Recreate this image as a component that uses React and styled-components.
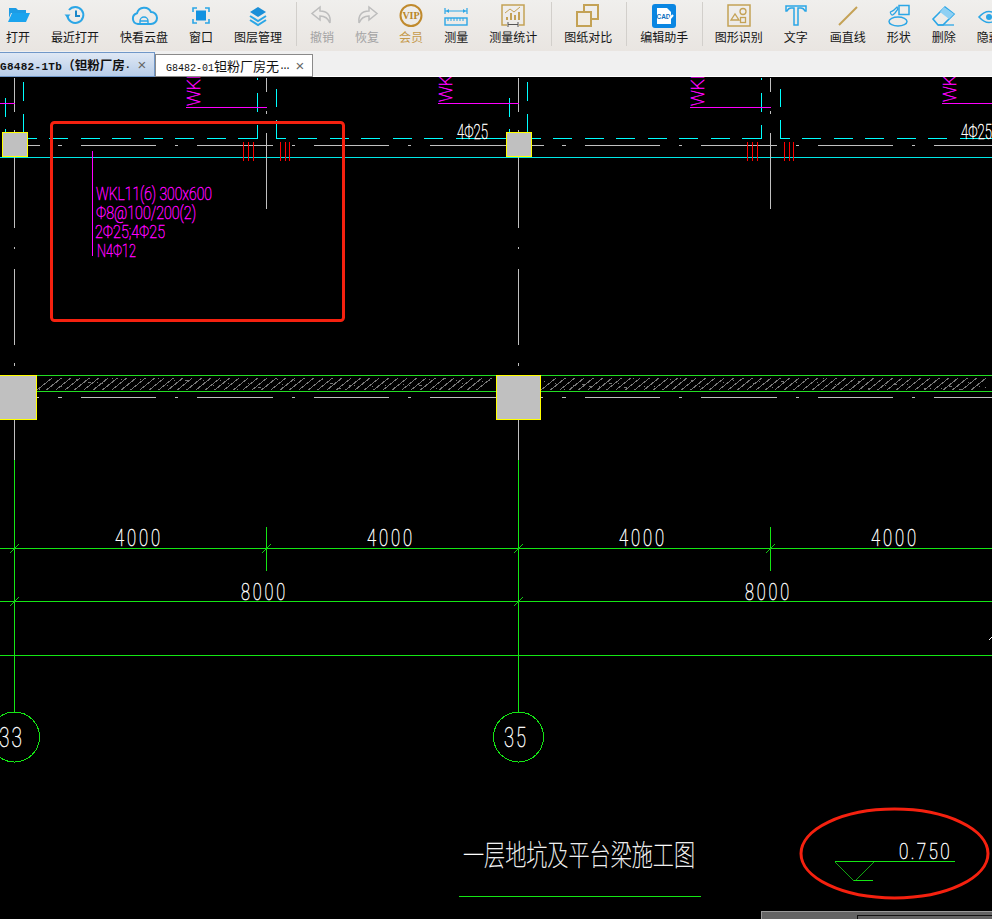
import React from "react";
import styled, { createGlobalStyle } from "styled-components";

const Global = createGlobalStyle`
  html, body { margin: 0; padding: 0; background: #000; overflow: hidden; }
  #root { height: 919px; }
`;
const Page = styled.div`
  display: flex; flex-direction: column; width: 992px; height: 919px; overflow: hidden;
  font-family: "Noto Sans CJK SC", "Liberation Sans", sans-serif;
`;
const Toolbar = styled.div`
  display: flex; flex: none; gap: 21px; height: 51px; padding: 4px 0 0 6px; box-sizing: border-box;
  background: linear-gradient(#f0efed, #e9e5e1); overflow: hidden;
`;
const Tool = styled.div`
  display: flex; flex: none; flex-direction: column; align-items: center;
  margin-left: ${(p) => p.$nudge || 0}px;
  color: ${(p) => (p.$tone === "off" ? "#a3a3a3" : p.$tone === "vip" ? "#c59a4c" : "#161616")};
`;
const IconSlot = styled.svg`display: block; width: 24px; height: 24px; overflow: visible; fill: none;`;
const ToolLabel = styled.span`display: block; margin-top: 2px; font-size: 12px; line-height: 14px; white-space: nowrap;`;
const Sep = styled.div`
  flex: none; width: 1px; height: 44px; margin: -2px -7.5px 0; background: #d2cfcb;
  margin-right: ${(p) => -7.5 - (p.$pull || 0)}px;
`;
const TabBar = styled.div`
  display: flex; flex: none; align-items: flex-end; height: 26px; box-sizing: border-box;
  background: #f0f0f0; border-bottom: 1px solid #fff;
`;
const Tab = styled.div`
  display: flex; flex: none; align-items: center; box-sizing: border-box; overflow: hidden; white-space: nowrap;
  height: ${(p) => (p.$active ? 25 : 23)}px;
  width: ${(p) => (p.$active ? 155 : 158)}px;
  padding-left: ${(p) => (p.$active ? 0 : 10)}px;
  margin-bottom: -1px;
  border: 1px solid ${(p) => (p.$active ? "#7097c8" : "#8a8a8a")};
  border-left-width: ${(p) => (p.$active ? 0 : 1)}px;
  background: ${(p) => (p.$active ? "linear-gradient(#dfe8f4, #b8cde9)" : "#fff")};
  color: #111; font-size: ${(p) => (p.$active ? 12.5 : 13)}px; font-weight: ${(p) => (p.$active ? 700 : 400)};
`;
const TabText = styled.span`flex: 1; min-width: 0; overflow: hidden;`;
const Mono = styled.span`
  font-family: "Liberation Mono", monospace;
  font-size: ${(p) => (p.$active ? 11 : 10)}px;
  letter-spacing: ${(p) => (p.$active ? 0.3 : 0)}px;
`;
const Dots = styled.span`font-family: "Liberation Mono", monospace; font-size: 10px; letter-spacing: -3px;`;
const Close = styled.span`flex: none; width: 10px; margin-right: 7px; color: #666; font: 15px/1 "Liberation Sans", sans-serif; text-align: center;`;
const Canvas = styled.div`position: relative; flex: 1; background: #000; overflow: hidden;`;
const Drawing = styled.svg`display: block; width: 992px; height: 842px; shape-rendering: crispEdges;`;
const Cad = styled.text`
  fill: ${(p) => p.$c || "#fff"};
  stroke: ${(p) => p.$c || "#fff"};
  stroke-width: ${(p) => (p.$cjk ? 0.3 : 0.45)};
  font-family: ${(p) => p.$cjk ? '"Noto Sans CJK SC", sans-serif' : 'Roboto, "Liberation Sans", sans-serif'};
  font-weight: 100; shape-rendering: auto;
`;
const Markup = styled.g`shape-rendering: geometricPrecision; fill: none; stroke: #f5210f; stroke-width: 3;`;
const Dock = styled.div`
  position: absolute; right: 0; bottom: 0; width: 231px; height: 8px; box-sizing: border-box;
  background: #646464; border: 1px solid #9a9a9a; border-width: 1px 0 0 1px;
`;
const DockPane = styled.div`
  position: absolute; left: 95px; right: 0; top: 3px; bottom: 0;
  border: 1px solid #111; border-width: 1px 0 0 1px;
`;

const B = "#2ba6e6", G = "#c4a255", GR = "#bdbdbd";

const icons = {
  folder: <><path d="M3 4h7l2 2h8v3H5l-2 5z" fill="#1d9ce5" /><path d="M6 9h18l-4 9H2z" fill="#1ba4ee" /></>,
  recent: <><path d="M6 6a8 8 0 1 1-1.6 6" stroke={B} strokeWidth="2" /><path d="M1.500 10.500h6l-3 3.500z" fill={B} /><path d="M13 6.500v5.500h4" stroke="#1a86c8" strokeWidth="2" /></>,
  cloud: <><path d="M6 20a5.500 5.500 0 0 1-1-10.800A7.500 7.500 0 0 1 19 8a6 6 0 0 1 0 12z" stroke={B} strokeWidth="2" /><path d="M8 20v-3a4 4 0 0 1 8 0v3M8 17h8" stroke={B} strokeWidth="1.400" /></>,
  window: <><path d="M4 8V4h4M16 4h4v4M20 15v4h-4M8 19H4v-4" stroke={B} strokeWidth="1.600" /><rect x="7" y="6.500" width="10" height="10" fill="#1292e0" /></>,
  layers: <><path d="M12 3l8 5-8 5-8-5z" fill="#1a8fd8" /><path d="M4 12l8 5 8-5M4 16l8 5 8-5" stroke={B} strokeWidth="2" /></>,
  undo: <path d="M10 3L2 9.500 10 16v-4c5 0 8 2 10 7 1-8-3-12-10-12z" stroke={GR} strokeWidth="1.500" />,
  redo: <path d="M14 3l8 6.500-8 6.500v-4c-5 0-8 2-10 7-1-8 3-12 10-12z" stroke={GR} strokeWidth="1.500" />,
  vip: <><circle cx="12" cy="11.500" r="10.500" stroke="#c08a2d" strokeWidth="2" /><text x="12" y="15" fontFamily="Liberation Serif, serif" fontWeight="700" fontSize="10" textAnchor="middle" fill="#b98526">VIP</text></>,
  ruler: <><path d="M1 7h22M1 4v6M23 4v6" stroke={B} strokeWidth="1.200" /><path d="M2 7l3-2v4zM22 7l-3-2v4z" fill={B} /><rect x="1" y="14" width="22" height="7" stroke={B} strokeWidth="1.400" /><path d="M4 14v3M7 14v3M10 14v3M13 14v3M16 14v3M19 14v3" stroke={B} /></>,
  stat: <><path d="M6 21H1V1h22v20h-5" stroke={G} strokeWidth="1.500" /><path d="M6 16v-3M10 16V9M14 16v-5M18 16V8" stroke={G} strokeWidth="2" /><path d="M4 9l5-4 4 3 6-5" stroke={G} /><path d="M7 18v5M17 18v5M7 20.500h10" stroke="#555" /></>,
  compare: <><rect x="8" y="1" width="14" height="14" stroke={G} strokeWidth="2" /><rect x="1" y="8" width="14" height="14" fill="#f1ece4" stroke={G} strokeWidth="2" /></>,
  cad: <><rect x="0" y="0" width="24" height="24" rx="3" fill="#0a86e2" /><path d="M5 4h10l4 4v12H5z" fill="#fff" /><text x="11.500" y="15" fontFamily="Liberation Sans, sans-serif" fontWeight="700" fontSize="6.500" textAnchor="middle" fill="#0a6fc0">CAD</text><path d="M14 19l7-8" stroke="#fff" strokeWidth="2" /></>,
  recog: <><rect x="1" y="1" width="22" height="21" stroke={G} strokeWidth="1.500" /><path d="M4 16l4-6 4 6z" stroke={G} strokeWidth="1.300" /><circle cx="16" cy="7.500" r="3" stroke={G} strokeWidth="1.300" /><rect x="13.500" y="13.500" width="5" height="5" stroke={G} strokeWidth="1.300" /></>,
  text: <path d="M2 2h20v5h-1c-1-2-2-3-4-3h-3v17h-4V4H7C5 4 4 5 3 7H2z" stroke={B} strokeWidth="1.500" />,
  line: <path d="M3 21L21 3" stroke={G} strokeWidth="2" />,
  shape: <><rect x="12" y="1.500" width="10" height="9" stroke={B} strokeWidth="1.500" /><ellipse cx="11" cy="17.500" rx="9" ry="4.500" stroke={B} strokeWidth="1.500" /><path d="M4 10c-2-3 1-2 3-4l3-3 1 2-3 4c-2 2-3 3-4 1z" stroke={B} strokeWidth="1.300" /></>,
  eraser: <><path d="M1 15L13 3l9 7-11 11H6z" stroke={B} strokeWidth="1.600" /><path d="M8 8l4-5 10 7-5 5z" fill="#8fd0f3" /><path d="M6 21h16" stroke={B} strokeWidth="1.300" /></>,
  hide: <><path d="M2 13q10-11 20 0-10 11-20 0z" stroke={B} strokeWidth="1.600" /><circle cx="12" cy="13" r="3" fill={B} /></>,
};

const tools = [
  { label: "打开", icon: "folder" }, { label: "最近打开", icon: "recent" }, { label: "快看云盘", icon: "cloud" },
  { label: "窗口", icon: "window" }, { label: "图层管理", icon: "layers" }, { sep: 0 },
  { label: "撤销", icon: "undo", tone: "off" }, { label: "恢复", icon: "redo", tone: "off" },
  { label: "会员", icon: "vip", tone: "vip", nudge: -1 }, { label: "测量", icon: "ruler" }, { label: "测量统计", icon: "stat" }, { sep: 1 },
  { label: "图纸对比", icon: "compare" }, { sep: 0 }, { label: "编辑助手", icon: "cad" }, { sep: 1.5 },
  { label: "图形识别", icon: "recog" }, { label: "文字", icon: "text" }, { label: "画直线", icon: "line", nudge: 1 },
  { label: "形状", icon: "shape" }, { label: "删除", icon: "eraser" }, { label: "隐藏", icon: "hide" },
];

const H = (y, pairs) => pairs.map(([a, b]) => `M${a} ${y}H${b}`).join("");
const V = (x, pairs) => pairs.map(([a, b]) => `M${x} ${a}V${b}`).join("");
const Stroke = ({ d, c, w = 1 }) => <path d={d} fill="none" stroke={c} strokeWidth={w} />;

const dashes = [[28, 37], [49, 68], [81, 100], [112, 131], [144, 163], [175, 194], [207, 226], [238, 258], [276, 286], [298, 317], [330, 349], [361, 380], [393, 412], [424, 443], [456, 506]];
const grayDash = [[28, 40], [58, 62], [81, 156], [175, 178], [197, 273], [292, 295], [314, 389], [408, 411], [430, 506]];
const grayLow = [[37, 39], ...grayDash.slice(1)];

const cyanPath = H(138.5, dashes) + V(257.5, [[78, 80], [93, 112], [125, 139]]) + V(276.5, [[89, 107], [120, 139]]) + V(5.5, [[98, 117], [129, 132]]) + V(23.5, [[82, 101], [114, 132]]);
const grayPath = H(145.5, grayDash) + H(397.5, grayLow) + V(14.5, [[78, 112], [130, 132], [157, 228], [247, 249], [269, 345], [363, 366], [420, 460]]) + V(266.5, [[78, 92], [111, 114], [133, 209]]);
const redPath = [243.5, 248.5, 253.5, 280.5, 285.5, 289.5].map((x) => `M${x} 142V161`).join("");
const magPath = H(107.5, [[186, 267]]) + H(103.5, [[438, 519], [-66, 15]]);
const greenPath = V(14.5, [[460, 712]]) + V(266.5, [[527, 571]]);
const tickPath = "M10 553L19 544M262 553L271 544M10 606L19 597";

let seed = 7;
const rnd = () => (seed = (seed * 137 + 11) % 1009) / 1009;
const hatch = (from, to) => {
  let d = "";
  for (let x = from; x < to - 15; x += 9.35) d += `M${x.toFixed(1)} 390L${(x + 15).toFixed(1)} 378`;
  for (let x = from + 2; x < to - 3; x += 9) {
    const y = 378 + Math.floor(rnd() * 12);
    const s = rnd() > 0.85 ? 3 : 1;
    d += `M${x + Math.floor(rnd() * 5)} ${y}h${s}`;
  }
  return d;
};
const hatchPath = hatch(37, 496) + hatch(541, 992);

const Unit = ({ dx }) => (
  <g transform={`translate(${dx} 0)`}>
    <Stroke d={cyanPath} c="#00ffff" />
    <Stroke d={grayPath} c="#c0c0c0" />
    <Stroke d={redPath} c="#ff0000" />
    <Stroke d={magPath} c="#ff00ff" />
    <Stroke d={greenPath} c="#14e614" />
    <Stroke d={tickPath} c="#14c814" />
    <rect x="2.500" y="132.500" width="25" height="24" fill="#c0c0c0" stroke="#ffff00" />
    <rect x="-7.500" y="375.500" width="44" height="44" fill="#c0c0c0" stroke="#ffff00" />
    <Cad x="200" y="106" transform="rotate(-90 200 106)" fontSize="19" textLength="36" lengthAdjust="spacingAndGlyphs" $c="#ff00ff">WKL</Cad>
    <Cad x="452" y="102" transform="rotate(-90 452 102)" fontSize="19" textLength="36" lengthAdjust="spacingAndGlyphs" $c="#ff00ff">WKL</Cad>
    <Cad x="457" y="139" fontSize="20" textLength="31" lengthAdjust="spacingAndGlyphs">4Φ25</Cad>
    <Cad x="115" y="546" fontSize="23" letterSpacing="4" textLength="48" lengthAdjust="spacingAndGlyphs">4000</Cad>
    <Cad x="367" y="546" fontSize="23" letterSpacing="4" textLength="48" lengthAdjust="spacingAndGlyphs">4000</Cad>
    <Cad x="241" y="600" fontSize="23" letterSpacing="4" textLength="47" lengthAdjust="spacingAndGlyphs">8000</Cad>
    <circle cx="14.500" cy="737" r="25" fill="none" stroke="#14e614" />
  </g>
);

export default function App() {
  return (
    <Page>
      <Global />
      <Toolbar>
        {tools.map((t, i) =>
          t.sep !== undefined ? <Sep key={i} $pull={t.sep} /> : (
            <Tool key={i} $tone={t.tone} $nudge={t.nudge}>
              <IconSlot viewBox="0 0 24 24">{icons[t.icon]}</IconSlot>
              <ToolLabel>{t.label}</ToolLabel>
            </Tool>
          )
        )}
      </Toolbar>
      <TabBar>
        <Tab $active>
          <TabText><Mono $active>G8482-1Tb</Mono>（钽粉厂房<Dots>·</Dots></TabText>
          <Close>×</Close>
        </Tab>
        <Tab>
          <TabText><Mono>G8482-01</Mono>钽粉厂房无<Dots>···</Dots></TabText>
          <Close>×</Close>
        </Tab>
      </TabBar>
      <Canvas>
        <Drawing viewBox="0 77 992 842">
          <Stroke d={H(157.5, [[0, 992]])} c="#00e8e8" />
          <Stroke d={H(375.5, [[36, 992]]) + H(391.5, [[36, 992]])} c="#22dd22" />
          <Stroke d={hatchPath} c="#777777" />
          <Stroke d={H(548.5, [[0, 992]]) + H(601.5, [[0, 992]]) + H(655.5, [[0, 992]])} c="#14e614" />
          <Unit dx={0} />
          <Unit dx={504} />
          <Stroke d="M989 640L992 637" c="#fff" />

          <Stroke d={V(92.5, [[151, 256]])} c="#ff00ff" />
          <Cad x="96" y="200" fontSize="19" textLength="116" lengthAdjust="spacingAndGlyphs" $c="#ff00ff">WKL11(6) 300x600</Cad>
          <Cad x="96" y="219" fontSize="19" textLength="100" lengthAdjust="spacingAndGlyphs" $c="#ff00ff">Φ8@100/200(2)</Cad>
          <Cad x="95" y="238" fontSize="19" textLength="70" lengthAdjust="spacingAndGlyphs" $c="#ff00ff">2Φ25;4Φ25</Cad>
          <Cad x="97" y="257" fontSize="19" textLength="39" lengthAdjust="spacingAndGlyphs" $c="#ff00ff">N4Φ12</Cad>

          <Cad x="504" y="747" fontSize="27" letterSpacing="3" textLength="24" lengthAdjust="spacingAndGlyphs">35</Cad>
          <Cad x="-1" y="747" fontSize="27" letterSpacing="3" textLength="25" lengthAdjust="spacingAndGlyphs">33</Cad>

          <Cad x="463" y="866" fontSize="29" textLength="232" lengthAdjust="spacingAndGlyphs" $cjk>一层地坑及平台梁施工图</Cad>
          <Stroke d={H(896.5, [[459, 701]])} c="#14e614" />

          <Stroke d={H(861.5, [[835, 955]]) + H(880.5, [[854, 873]])} c="#14e614" />
          <path d="M835 861.500L854 880.500L873 861.500" fill="none" stroke="#14d014" strokeWidth="0.8" />
          <Cad x="899" y="859" fontSize="22" letterSpacing="3" textLength="53" lengthAdjust="spacingAndGlyphs">0.750</Cad>

          <Markup>
            <rect x="51.500" y="122.500" width="292" height="198" rx="3" />
            <ellipse cx="894.500" cy="853.500" rx="93.500" ry="44.500" />
          </Markup>
        </Drawing>
        <Dock><DockPane /></Dock>
      </Canvas>
    </Page>
  );
}
